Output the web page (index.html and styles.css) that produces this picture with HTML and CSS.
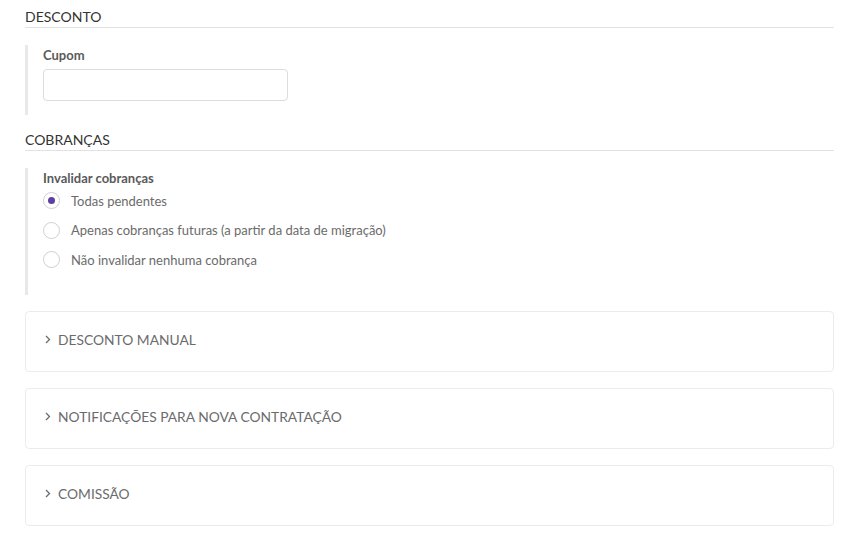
FILE: index.html
```html
<!DOCTYPE html>
<html lang="pt-BR">
<head>
    <meta charset="UTF-8">
    <meta name="viewport" content="width=device-width, initial-scale=1.0">
    <title>Migração de plano</title>
    <link rel="stylesheet" href="styles.css">
</head>
<body>
    <main class="page">
        <section class="block">
            <h2 class="section-title">DESCONTO</h2>
            <div class="field-group">
                <label class="field-label" for="cupom">Cupom</label>
                <input type="text" id="cupom" class="text-input">
            </div>
        </section>

        <section class="block">
            <h2 class="section-title">COBRANÇAS</h2>
            <div class="field-group field-group-radios">
                <span class="field-label">Invalidar cobranças</span>
                <label class="radio-row">
                    <input type="radio" name="invalidar" value="todas" checked>
                    <span class="radio-mark"></span>
                    <span>Todas pendentes</span>
                </label>
                <label class="radio-row">
                    <input type="radio" name="invalidar" value="futuras">
                    <span class="radio-mark"></span>
                    <span>Apenas cobranças futuras (a partir da data de migração)</span>
                </label>
                <label class="radio-row">
                    <input type="radio" name="invalidar" value="nenhuma">
                    <span class="radio-mark"></span>
                    <span>Não invalidar nenhuma cobrança</span>
                </label>
            </div>
        </section>

        <div class="collapse-list">
            <div class="collapse-card">
                <svg class="chevron" width="6" height="9" viewBox="0 0 6 9"><path d="M1 1l3.5 3.5L1 8" fill="none" stroke="currentColor" stroke-width="1.3"/></svg>
                <span>DESCONTO MANUAL</span>
            </div>
            <div class="collapse-card">
                <svg class="chevron" width="6" height="9" viewBox="0 0 6 9"><path d="M1 1l3.5 3.5L1 8" fill="none" stroke="currentColor" stroke-width="1.3"/></svg>
                <span>NOTIFICAÇÕES PARA NOVA CONTRATAÇÃO</span>
            </div>
            <div class="collapse-card">
                <svg class="chevron" width="6" height="9" viewBox="0 0 6 9"><path d="M1 1l3.5 3.5L1 8" fill="none" stroke="currentColor" stroke-width="1.3"/></svg>
                <span>COMISSÃO</span>
            </div>
        </div>
    </main>
</body>
</html>
```

FILE: styles.css
```css
/* Base */
:root {
    --text-dark: #3a3a3a;
    --text-muted: #6b6b6b;
    --line-color: #e2e2e2;
    --bar-color: #e8e8e8;
    --accent: #5c3f9f;
    --radius: 4px;
}

* {
    margin: 0;
    padding: 0;
    box-sizing: border-box;
}

body {
    background-color: #fff;
    color: var(--text-dark);
    font-family: Lato, "Open Sans", Arial, sans-serif;
}

.page {
    padding: 0 24px 12px 25px;
}

/* Sections */
.section-title {
    font-size: 14px;
    font-weight: 400;
    line-height: 17px;
    padding: 8px 0 2px;
    border-bottom: 1px solid var(--line-color);
    color: #333;
}

.block + .block {
    margin-top: 8px;
}

.field-group {
    margin-top: 17px;
    border-left: 3px solid var(--bar-color);
    padding: 2px 0 14px 15px;
}

.field-label {
    display: block;
    font-size: 13px;
    font-weight: 700;
    line-height: 17px;
    color: #5a5a5a;
    margin-bottom: 5px;
}

.text-input {
    display: block;
    width: 245px;
    height: 32px;
    border: 1px solid #dcdcdc;
    border-radius: var(--radius);
    padding: 0 10px;
    font-size: 13px;
    font-family: inherit;
}

/* Radios */
.field-group-radios {
    padding-bottom: 20px;
}

.field-group-radios .field-label {
    margin-bottom: -1px;
}

.radio-row {
    display: flex;
    align-items: center;
    gap: 11px;
    height: 29.5px;
    font-size: 13px;
    color: var(--text-muted);
    cursor: pointer;
}

.radio-row input {
    display: none;
}

.radio-mark {
    width: 17px;
    height: 17px;
    border: 1px solid #cfcfcf;
    border-radius: 50%;
    display: flex;
    align-items: center;
    justify-content: center;
    flex-shrink: 0;
}

.radio-row input:checked + .radio-mark::after {
    content: "";
    width: 7px;
    height: 7px;
    border-radius: 50%;
    background-color: var(--accent);
}

/* Collapse cards */
.collapse-list {
    margin-top: 16px;
    display: flex;
    flex-direction: column;
    gap: 16px;
}

.collapse-card {
    height: 61px;
    border: 1px solid #ececf0;
    border-radius: var(--radius);
    display: flex;
    align-items: center;
    gap: 7px;
    padding: 0 0 3px 19px;
    font-size: 13.8px;
    color: var(--text-muted);
}

.chevron {
    flex-shrink: 0;
}
```
